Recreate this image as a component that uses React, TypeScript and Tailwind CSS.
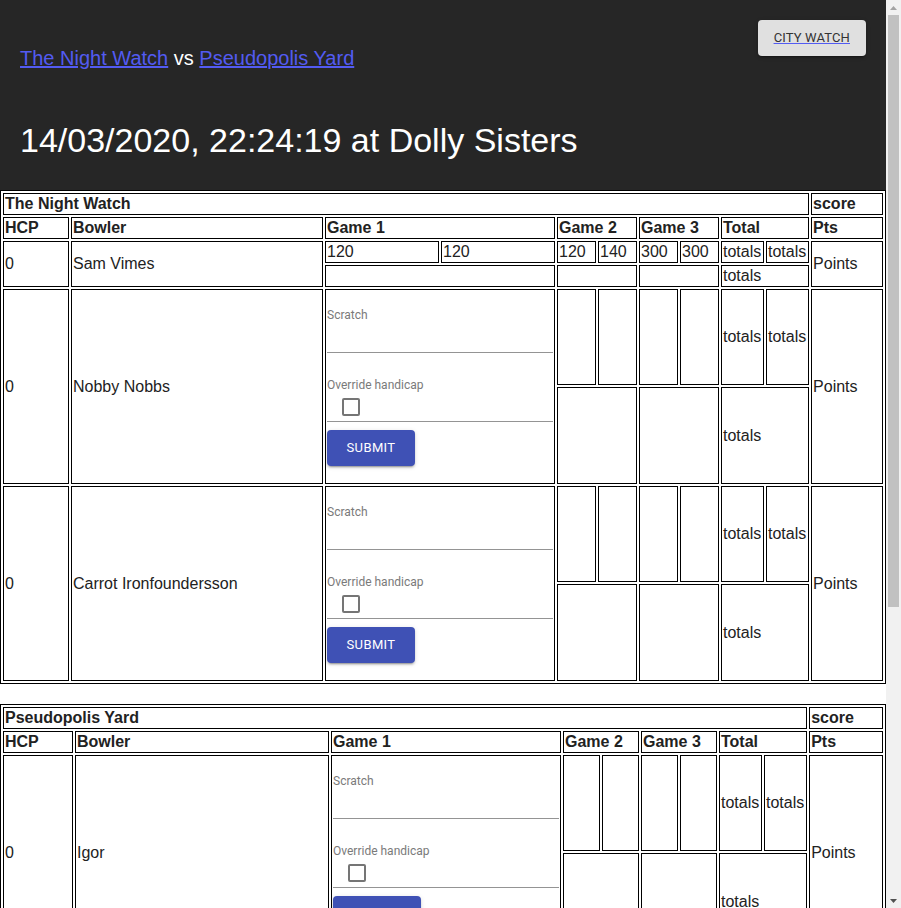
import React from "react";

const td =
  "border border-black p-px align-middle text-left font-normal leading-[18px]";
const th =
  "border border-black p-px align-middle text-left font-bold leading-[18px]";

const colsA = [
  "w-[66px]",
  "w-[252px]",
  "w-[114px]",
  "w-[114px]",
  "w-[39px]",
  "w-[39px]",
  "w-[39px]",
  "w-[39px]",
  "w-[43px]",
  "w-[43px]",
  "w-[72px]",
];
const colsB = [
  "w-[70px]",
  "w-[254px]",
  "w-[114px]",
  "w-[114px]",
  "w-[37px]",
  "w-[37px]",
  "w-[37px]",
  "w-[37px]",
  "w-[43px]",
  "w-[43px]",
  "w-[74px]",
];

type Bowler =
  | { kind: "scores"; hcp: string; name: string; g: string[] }
  | { kind: "form"; hcp: string; name: string };

function ScoreForm() {
  return (
    <div className="flex h-[191px] flex-col font-['Roboto',sans-serif]">
      <div className="mt-[17px] h-[14px] text-[12px] leading-[14px] text-[#7a7a7a]">
        Scratch
      </div>
      <div className="h-[31px] border-b border-[#949494]" />
      <div className="mt-[25px] h-[14px] text-[12px] leading-[14px] text-[#7a7a7a]">
        Override handicap
      </div>
      <div className="ml-[15px] mt-[6px] h-[18px] w-[18px] rounded-[2px] border-2 border-[#757575] bg-white" />
      <div className="mt-[5px] h-px bg-[#949494]" />
      <button
        type="button"
        className="mt-2 flex h-9 w-[88px] items-center justify-center rounded bg-[#3f51b5] text-[13px] font-normal uppercase tracking-[0.02857em] text-white shadow-[0px_3px_1px_-2px_rgba(0,0,0,0.2),0px_2px_2px_0px_rgba(0,0,0,0.14),0px_1px_5px_0px_rgba(0,0,0,0.12)]"
      >
        Submit
      </button>
    </div>
  );
}

function BowlerRows({ b }: { b: Bowler }) {
  if (b.kind === "scores") {
    return (
      <>
        <tr className="h-[22px]">
          <td rowSpan={2} className={td}>
            {b.hcp}
          </td>
          <td rowSpan={2} className={td}>
            {b.name}
          </td>
          {b.g.map((v, i) => (
            <td key={i} className={td}>
              {v}
            </td>
          ))}
          <td className={td}>totals</td>
          <td className={td}>totals</td>
          <td rowSpan={2} className={td}>
            Points
          </td>
        </tr>
        <tr className="h-[22px]">
          <td colSpan={2} className={td}></td>
          <td colSpan={2} className={td}></td>
          <td colSpan={2} className={td}></td>
          <td colSpan={2} className={td}>
            totals
          </td>
        </tr>
      </>
    );
  }
  return (
    <>
      <tr className="h-[96px]">
        <td rowSpan={2} className={td}>
          {b.hcp}
        </td>
        <td rowSpan={2} className={td}>
          {b.name}
        </td>
        <td rowSpan={2} colSpan={2} className={td}>
          <ScoreForm />
        </td>
        <td className={td}></td>
        <td className={td}></td>
        <td className={td}></td>
        <td className={td}></td>
        <td className={td}>totals</td>
        <td className={td}>totals</td>
        <td rowSpan={2} className={td}>
          Points
        </td>
      </tr>
      <tr className="h-[97px]">
        <td colSpan={2} className={td}></td>
        <td colSpan={2} className={td}></td>
        <td colSpan={2} className={td}>
          totals
        </td>
      </tr>
    </>
  );
}

function TeamTable({
  team,
  cols,
  bowlers,
  className,
}: {
  team: string;
  cols: string[];
  bowlers: Bowler[];
  className?: string;
}) {
  return (
    <table
      className={
        "w-full table-fixed border-separate border-spacing-[2px] border border-black text-[16px] " +
        (className ?? "")
      }
    >
      <colgroup>
        {cols.map((c, i) => (
          <col key={i} className={c} />
        ))}
      </colgroup>
      <tbody>
        <tr className="h-[22px]">
          <th colSpan={10} className={th}>
            {team}
          </th>
          <th className={th}>score</th>
        </tr>
        <tr className="h-[22px]">
          <th className={th}>HCP</th>
          <th className={th}>Bowler</th>
          <th colSpan={2} className={th}>
            Game 1
          </th>
          <th colSpan={2} className={th}>
            Game 2
          </th>
          <th colSpan={2} className={th}>
            Game 3
          </th>
          <th colSpan={2} className={th}>
            Total
          </th>
          <th className={th}>Pts</th>
        </tr>
        {bowlers.map((b, i) => (
          <BowlerRows key={i} b={b} />
        ))}
      </tbody>
    </table>
  );
}

function Scrollbar() {
  return (
    <aside className="flex h-[908px] w-[15px] shrink-0 flex-col bg-[#f1f1f1]">
      <div className="flex h-[15px] items-center justify-center">
        <svg width="7" height="4" viewBox="0 0 7 4">
          <path d="M3.5 0 L7 4 L0 4 Z" fill="#a3a3a3" />
        </svg>
      </div>
      <div className="mx-[2px] h-[592px] bg-[#c1c1c1]" />
      <div className="flex-1" />
      <div className="flex h-[15px] items-center justify-center">
        <svg width="7" height="4" viewBox="0 0 7 4">
          <path d="M0 0 L7 0 L3.5 4 Z" fill="#505050" />
        </svg>
      </div>
    </aside>
  );
}

export default function App() {
  const watch: Bowler[] = [
    {
      kind: "scores",
      hcp: "0",
      name: "Sam Vimes",
      g: ["120", "120", "120", "140", "300", "300"],
    },
    { kind: "form", hcp: "0", name: "Nobby Nobbs" },
    { kind: "form", hcp: "0", name: "Carrot Ironfoundersson" },
  ];
  const yard: Bowler[] = [
    { kind: "form", hcp: "0", name: "Igor" },
    { kind: "form", hcp: "0", name: "Detritus" },
    { kind: "form", hcp: "0", name: "Cheery Littlebottom" },
  ];

  return (
    <div className="flex h-[908px] items-start overflow-hidden bg-white font-['Liberation_Sans',Arial,sans-serif] text-[#222222]">
      <main className="w-[886px] shrink-0">
        <header className="flex h-[190px] justify-between bg-[#262626] px-5">
          <div className="pt-[42px]">
            <div className="text-[20px] leading-[32px] text-white">
              <a href="#" className="text-[#535bf2] underline">
                The Night Watch
              </a>{" "}
              vs{" "}
              <a href="#" className="text-[#535bf2] underline">
                Pseudopolis Yard
              </a>
            </div>
            <div className="mt-[45px] text-[34px] leading-[42px] text-white">
              14/03/2020, 22:24:19 at Dolly Sisters
            </div>
          </div>
          <div className="pt-5">
            <a href="#" className="underline decoration-[#535bf2]">
              <span className="flex h-9 items-center rounded bg-[#e0e0e0] px-4 font-['Roboto',sans-serif] text-[13px] font-normal uppercase tracking-[0.01em] text-[#333333] underline decoration-[#535bf2] shadow-[0px_3px_1px_-2px_rgba(0,0,0,0.2),0px_2px_2px_0px_rgba(0,0,0,0.14),0px_1px_5px_0px_rgba(0,0,0,0.12)]">
                City Watch
              </span>
            </a>
          </div>
        </header>
        <TeamTable team="The Night Watch" cols={colsA} bowlers={watch} />
        <TeamTable
          team="Pseudopolis Yard"
          cols={colsB}
          bowlers={yard}
          className="mt-5"
        />
      </main>
      <Scrollbar />
    </div>
  );
}
